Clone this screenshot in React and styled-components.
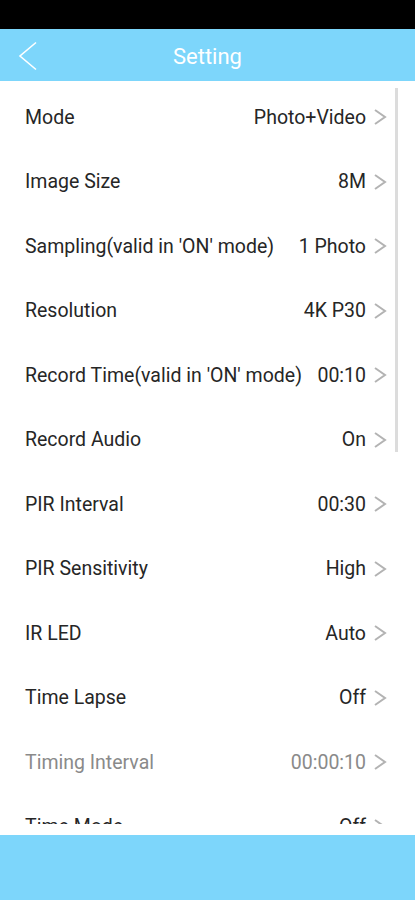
import React from 'react';
import styled, { createGlobalStyle } from 'styled-components';

const GlobalStyle = createGlobalStyle`
  html, body {
    margin: 0;
    padding: 0;
    background: #fff;
  }
  body {
    font-family: Roboto, "Noto Sans", "Liberation Sans", sans-serif;
  }
`;

const Page = styled.div`
  width: 415px;
  height: 900px;
  display: flex;
  flex-direction: column;
  overflow: hidden;
`;

const StatusBar = styled.div`
  height: 29px;
  background: #000;
  flex-shrink: 0;
`;

const Header = styled.header`
  height: 52px;
  background: #7dd6fb;
  display: flex;
  align-items: center;
  justify-content: center;
  position: relative;
  flex-shrink: 0;
`;

const BackButton = styled.button`
  position: absolute;
  left: 14px;
  top: 11px;
  width: 28px;
  height: 32px;
  border: 0;
  background: none;
  padding: 0;
  display: flex;
  align-items: center;
  justify-content: center;
`;

const Title = styled.h1`
  margin: 3px 0 0;
  color: #fff;
  font-size: 22px;
  font-weight: 400;
`;

const ListArea = styled.div`
  flex: 1;
  position: relative;
  overflow: hidden;
  padding-top: 4px;
  margin-bottom: 11px;
`;

const ScrollThumb = styled.div`
  position: absolute;
  right: 17px;
  top: 7px;
  width: 3px;
  height: 364px;
  background: #dcdcdc;
`;

const Row = styled.div`
  height: 64.5px;
  display: flex;
  align-items: center;
  padding: 0 27px 0 25px;
  color: ${p => (p.disabled ? '#8a8a8a' : '#262626')};
  font-size: 19.5px;
`;

const Label = styled.span`
  flex: 1;
  white-space: nowrap;
`;

const Value = styled.span`
  white-space: nowrap;
  margin-right: 6px;
`;

const Footer = styled.footer`
  height: 65px;
  background: #7dd6fb;
  flex-shrink: 0;
`;

const Chevron = () => (
  <svg width="16" height="18" viewBox="0 0 16 18">
    <path d="M3 2 L13 9 L3 16" fill="none" stroke="#b3b3b3" strokeWidth="2" />
  </svg>
);

const settings = [
  ['Mode', 'Photo+Video'],
  ['Image Size', '8M'],
  ["Sampling(valid in 'ON' mode)", '1 Photo'],
  ['Resolution', '4K P30'],
  ["Record Time(valid in 'ON' mode)", '00:10'],
  ['Record Audio', 'On'],
  ['PIR Interval', '00:30'],
  ['PIR Sensitivity', 'High'],
  ['IR LED', 'Auto'],
  ['Time Lapse', 'Off'],
  ['Timing Interval', '00:00:10', true],
  ['Time Mode', 'Off'],
];

export default function App() {
  return (
    <Page>
      <GlobalStyle />
      <StatusBar />
      <Header>
        <BackButton>
          <svg width="22" height="30" viewBox="0 0 22 30">
            <path d="M19 1.5 L3 15 L19 28.5" fill="none" stroke="#fff" strokeWidth="1.6" />
          </svg>
        </BackButton>
        <Title>Setting</Title>
      </Header>
      <ListArea>
        <ScrollThumb />
        {settings.map(([label, value, disabled]) => (
          <Row key={label} disabled={disabled}>
            <Label>{label}</Label>
            <Value>{value}</Value>
            <Chevron />
          </Row>
        ))}
      </ListArea>
      <Footer />
    </Page>
  );
}
